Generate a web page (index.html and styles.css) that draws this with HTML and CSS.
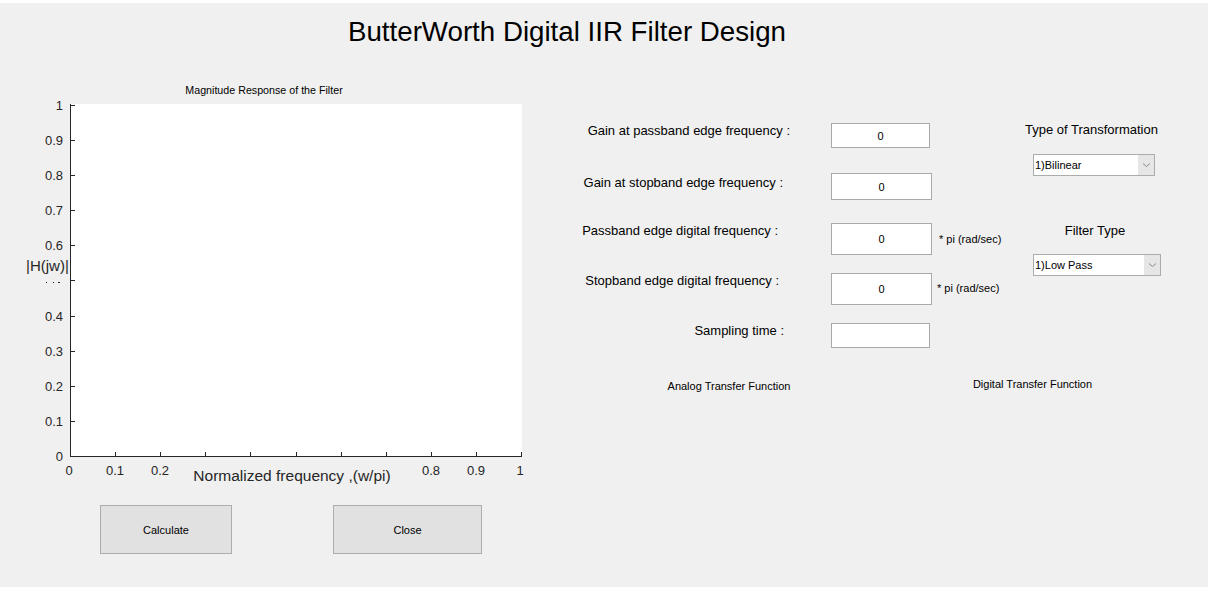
FILE: index.html
```html
<!DOCTYPE html>
<html>
<head>
<meta charset="utf-8">
<link rel="stylesheet" href="styles.css">
</head>
<body>
<div class="app">
  <h1 class="title">ButterWorth Digital IIR Filter Design</h1>
  <div class="main">
    <div class="left">
      <svg class="plot" width="560" height="425" viewBox="0 80 560 425">
        <text class="plot-title" x="264" y="94">Magnitude Response of the Filter</text>
        <rect x="70" y="104" width="452" height="353" fill="#ffffff"/>
        <g class="ticks" stroke="#262626" stroke-width="1">
          <line x1="70.5" y1="104" x2="70.5" y2="457"/>
          <line x1="70" y1="456.5" x2="522" y2="456.5"/>
          <line x1="70" y1="105.5" x2="75" y2="105.5"/>
          <line x1="70" y1="140.5" x2="75" y2="140.5"/>
          <line x1="70" y1="175.5" x2="75" y2="175.5"/>
          <line x1="70" y1="210.5" x2="75" y2="210.5"/>
          <line x1="70" y1="245.5" x2="75" y2="245.5"/>
          <line x1="70" y1="280.5" x2="75" y2="280.5"/>
          <line x1="70" y1="316.5" x2="75" y2="316.5"/>
          <line x1="70" y1="351.5" x2="75" y2="351.5"/>
          <line x1="70" y1="386.5" x2="75" y2="386.5"/>
          <line x1="70" y1="421.5" x2="75" y2="421.5"/>
          <line x1="115.5" y1="457" x2="115.5" y2="452"/>
          <line x1="160.5" y1="457" x2="160.5" y2="452"/>
          <line x1="205.5" y1="457" x2="205.5" y2="452"/>
          <line x1="250.5" y1="457" x2="250.5" y2="452"/>
          <line x1="296.5" y1="457" x2="296.5" y2="452"/>
          <line x1="341.5" y1="457" x2="341.5" y2="452"/>
          <line x1="386.5" y1="457" x2="386.5" y2="452"/>
          <line x1="431.5" y1="457" x2="431.5" y2="452"/>
          <line x1="476.5" y1="457" x2="476.5" y2="452"/>
          <line x1="521.5" y1="457" x2="521.5" y2="452"/>
        </g>
        <g class="ylabels">
          <text x="63" y="110">1</text>
          <text x="63" y="145">0.9</text>
          <text x="63" y="180">0.8</text>
          <text x="63" y="215">0.7</text>
          <text x="63" y="250">0.6</text>
          <text x="63" y="321">0.4</text>
          <text x="63" y="356">0.3</text>
          <text x="63" y="391">0.2</text>
          <text x="63" y="426">0.1</text>
          <text x="63" y="461">0</text>
        </g>
        <g class="xlabels">
          <text x="69" y="475">0</text>
          <text x="115" y="475">0.1</text>
          <text x="160" y="475">0.2</text>
          <text x="431" y="475">0.8</text>
          <text x="476" y="475">0.9</text>
          <text x="520" y="475">1</text>
        </g>
        <g class="hidden-dots" fill="#262626">
          <rect x="46" y="282" width="1" height="1"/>
          <rect x="53" y="282" width="1" height="1"/>
          <rect x="58" y="282" width="2" height="1"/>
        </g>
        <text class="ylabel" x="26" y="271">|H(jw)|</text>
        <text class="xlabel" x="292" y="481">Normalized frequency ,(w/pi)</text>
      </svg>
      <div class="buttons">
        <button class="btn btn-calc">Calculate</button>
        <button class="btn btn-close">Close</button>
      </div>
    </div>
    <div class="right">
      <div class="right-top">
        <div class="form">
          <div class="lbl lbl-1">Gain at passband edge frequency :</div>
          <div class="box box-s">0</div>
          <div class="unit"></div>

          <div class="lbl lbl-2">Gain at stopband edge frequency :</div>
          <div class="box box-m">0</div>
          <div class="unit"></div>

          <div class="lbl lbl-3">Passband edge digital frequency :</div>
          <div class="box box-l">0</div>
          <div class="unit unit-3">* pi (rad/sec)</div>

          <div class="lbl lbl-4">Stopband edge digital frequency :</div>
          <div class="box box-l">0</div>
          <div class="unit">* pi (rad/sec)</div>

          <div class="lbl">Sampling time :</div>
          <div class="box box-s"></div>
          <div class="unit"></div>
        </div>
        <div class="side">
          <div class="side-heading side-heading-1">Type of Transformation</div>
          <div class="select select-1">
            <span class="select-text">1)Bilinear</span>
            <span class="select-arrow"><svg width="9" height="6" viewBox="0 0 9 6"><path d="M1 1.5 L4.5 4.5 L8 1.5" fill="none" stroke="#8a8a8a" stroke-width="1"/></svg></span>
          </div>
          <div class="side-heading side-heading-2">Filter Type</div>
          <div class="select select-2">
            <span class="select-text">1)Low Pass</span>
            <span class="select-arrow"><svg width="9" height="6" viewBox="0 0 9 6"><path d="M1 1.5 L4.5 4.5 L8 1.5" fill="none" stroke="#8a8a8a" stroke-width="1"/></svg></span>
          </div>
        </div>
      </div>
      <div class="transfer">
        <div class="tf tf-analog">Analog Transfer Function</div>
        <div class="tf tf-digital">Digital Transfer Function</div>
      </div>
    </div>
  </div>
</div>
</body>
</html>
```

FILE: styles.css
```css
html, body {
  margin: 0;
  padding: 0;
  background: #ffffff;
}

.app {
  margin: 3px 2px 0 0;
  height: 584px;
  background: #f0f0f0;
  font-family: "Liberation Sans", Arial, sans-serif;
  color: #000;
  overflow: hidden;
}

.title {
  margin: 0;
  height: 77px;
  box-sizing: border-box;
  padding: 13px 0 0 348px;
  font-size: 27.7px;
  font-weight: normal;
  line-height: 32px;
  color: #000;
}

.main {
  display: flex;
}

.left {
  width: 560px;
  flex: none;
}

.plot {
  display: block;
}

.plot text {
  font-family: "Liberation Sans", Arial, sans-serif;
}

.plot-title {
  font-size: 10.7px;
  text-anchor: middle;
  fill: #000;
}

.ylabels text {
  font-size: 13px;
  text-anchor: end;
  fill: #262626;
}

.xlabels text {
  font-size: 13px;
  text-anchor: middle;
  fill: #262626;
}

.ylabel {
  font-size: 15px;
  fill: #262626;
}

.xlabel {
  font-size: 15.5px;
  text-anchor: middle;
  fill: #262626;
}

.buttons {
  display: flex;
  gap: 101px;
  padding-left: 100px;
}

.btn {
  height: 49px;
  margin: 0;
  padding: 0;
  background: #e1e1e1;
  border: 1px solid #adadad;
  font-family: "Liberation Sans", Arial, sans-serif;
  font-size: 11px;
  color: #000;
}

.btn-calc {
  width: 132px;
}

.btn-close {
  width: 149px;
}

.right {
  flex: 1;
  display: flex;
  flex-direction: column;
}

.right-top {
  display: flex;
}

.form {
  display: grid;
  grid-template-columns: 224px 148px 78px;
  grid-auto-rows: 50px;
  padding-top: 43px;
}

.lbl {
  font-size: 13px;
  line-height: 16px;
  text-align: right;
  color: #000;
  white-space: nowrap;
}

.lbl-1 {
  margin-right: -6px;
}

.lbl-2 {
  padding-top: 2px;
  margin-right: 1px;
}

.lbl-3 {
  margin-right: 6px;
}

.lbl-4 {
  margin-right: 5px;
}

.box {
  margin-left: 47px;
  box-sizing: border-box;
  background: #ffffff;
  border: 1px solid #a9a9a9;
  font-size: 11px;
  display: flex;
  align-items: center;
  justify-content: center;
  color: #000;
}

.box-s {
  width: 99px;
  height: 25px;
}

.box-m {
  width: 101px;
  height: 27px;
}

.box-l {
  width: 101px;
  height: 32px;
}

.unit {
  margin-left: 5px;
  padding-top: 9px;
  font-size: 11px;
  line-height: 12px;
  white-space: nowrap;
}

.unit-3 {
  margin-left: 7px;
  padding-top: 10px;
}

.side {
  display: flex;
  flex-direction: column;
  padding-top: 42px;
}

.side-heading {
  font-size: 13px;
  line-height: 16px;
  text-align: center;
  white-space: nowrap;
}

.side-heading-1 {
  width: 130px;
  margin-left: 15px;
}

.side-heading-2 {
  width: 124px;
  margin-left: 23px;
  margin-top: 47px;
}

.select {
  margin-left: 23px;
  height: 22px;
  box-sizing: border-box;
  background: #ffffff;
  border: 1px solid #acacac;
  display: flex;
  align-items: stretch;
  font-size: 11px;
}

.select-1 {
  width: 122px;
  margin-top: 16px;
}

.select-2 {
  width: 128px;
  margin-top: 15px;
}

.select-text {
  flex: 1;
  padding-left: 1px;
  display: flex;
  align-items: center;
}

.select-arrow {
  width: 16px;
  background: #e6e6e6;
  display: flex;
  align-items: center;
  justify-content: center;
}

.select-arrow svg {
  display: block;
}

.transfer {
  display: flex;
  padding-top: 7px;
}

.tf {
  font-size: 11px;
  line-height: 12px;
  text-align: center;
  white-space: nowrap;
}

.tf-analog {
  width: 338px;
}

.tf-digital {
  width: 269px;
  margin-top: -2px;
}
```
